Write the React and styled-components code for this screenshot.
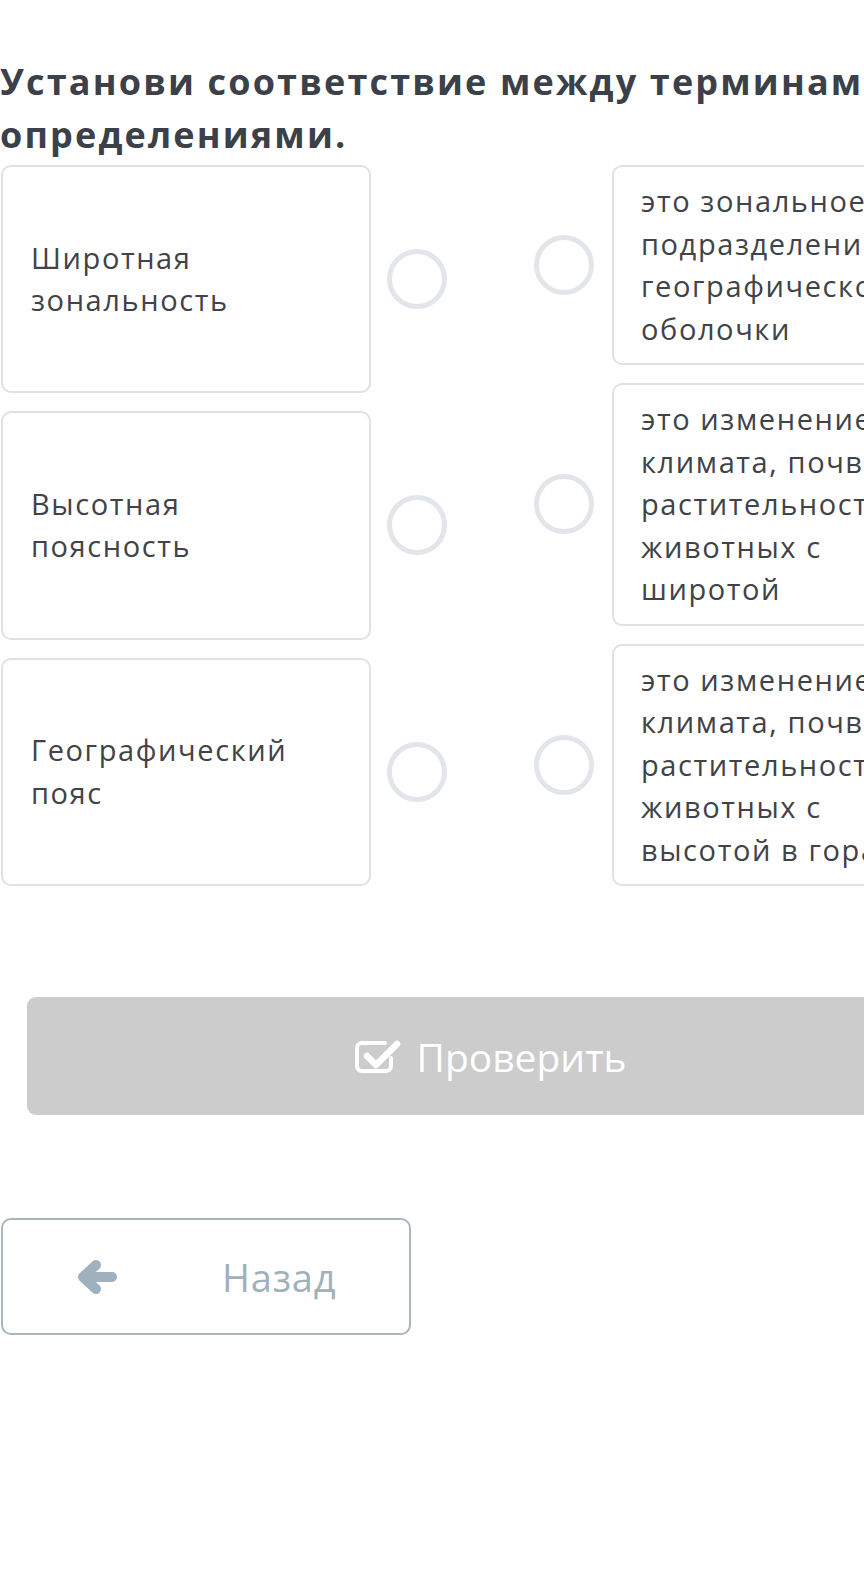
import styled, { createGlobalStyle } from "styled-components";

const GlobalStyle = createGlobalStyle`
  html, body {
    margin: 0;
    padding: 0;
    background: #ffffff;
    overflow-x: hidden;
  }
  body {
    font-family: "Open Sans", "Liberation Sans", sans-serif;
  }
`;

const Page = styled.div`
  width: 982px;
  padding: 55px 0 200px 0;
`;

const Title = styled.h1`
  margin: 0 0 4px 0;
  font-size: 36px;
  line-height: 53px;
  font-weight: 700;
  letter-spacing: 0.06em;
  color: #3b4049;
`;

const Board = styled.div`
  display: flex;
  gap: 87px;
  margin-left: 1px;
`;

const Column = styled.div`
  display: flex;
  flex-direction: column;
  gap: 18px;
`;

const Row = styled.div`
  display: flex;
  align-items: center;
  gap: ${(p) => p.$gap}px;
  flex: ${(p) => (p.$grow ? 1 : "0 0 auto")};
`;

const Card = styled.div`
  box-sizing: border-box;
  width: 370px;
  align-self: stretch;
  display: flex;
  align-items: center;
  border: 2px solid #e1e1e1;
  border-radius: 10px;
  padding: ${(p) => (p.$side === "left" ? "10px 50px 10px 28px" : "13px 44px 13px 27px")};
  font-size: 29px;
  line-height: 42.5px;
  letter-spacing: 0.055em;
  color: #404347;
`;

const Dot = styled.div`
  box-sizing: border-box;
  flex: 0 0 60px;
  width: 60px;
  height: 60px;
  border-radius: 50%;
  border: 5px solid #e2e5e9;
`;

const CheckButton = styled.button`
  box-sizing: border-box;
  display: flex;
  align-items: center;
  justify-content: center;
  gap: 15px;
  width: 928px;
  height: 118px;
  margin: 111px 0 0 27px;
  border: none;
  border-radius: 9px;
  background: #cccccc;
  color: #ffffff;
  font-family: "Open Sans", "Liberation Sans", sans-serif;
  font-size: 39px;
  font-weight: 400;
`;

const BackButton = styled.button`
  box-sizing: border-box;
  display: flex;
  align-items: center;
  gap: 105px;
  width: 410px;
  height: 117px;
  margin: 103px 0 0 1px;
  padding: 0 0 0 74px;
  background: #ffffff;
  border: 2px solid #aab6be;
  border-radius: 10px;
  color: #a1b1bc;
  font-family: "Open Sans", "Liberation Sans", sans-serif;
  font-size: 38px;
  letter-spacing: 0.02em;
`;

const CheckIcon = () => (
  <svg width="46" height="34" viewBox="-2 -2 46 34">
    <path
      d="M34 17 V25 a5 5 0 0 1 -5 5 H5 a5 5 0 0 1 -5 -5 V7 a5 5 0 0 1 5 -5 H28"
      fill="none"
      stroke="#ffffff"
      strokeWidth="4"
      strokeLinecap="round"
    />
    <polyline
      points="10,15 19,24 40,3"
      fill="none"
      stroke="#ffffff"
      strokeWidth="6.5"
      strokeLinecap="round"
      strokeLinejoin="round"
    />
  </svg>
);

const ArrowIcon = () => (
  <svg width="40" height="36" viewBox="0 0 40 36">
    <path
      d="M35 18 H8 M19 6 L6 18 L19 30"
      fill="none"
      stroke="#9fb1be"
      strokeWidth="10"
      strokeLinecap="round"
      strokeLinejoin="round"
    />
  </svg>
);

const terms = ["Широтная зональность", "Высотная поясность", "Географический пояс"];
const definitions = [
  "это зональное подразделение географической оболочки",
  "это изменение климата, почвы, растительности и животных с широтой",
  "это изменение климата, почвы, растительности и животных с высотой в горах",
];

const App = () => {
  return (
    <Page>
      <GlobalStyle />
      <Title>Установи соответствие между терминами и определениями.</Title>
      <Board>
        <Column>
          {terms.map((t) => (
            <Row key={t} $gap={16} $grow>
              <Card $side="left">{t}</Card>
              <Dot />
            </Row>
          ))}
        </Column>
        <Column>
          {definitions.map((d) => (
            <Row key={d} $gap={18}>
              <Dot />
              <Card $side="right">{d}</Card>
            </Row>
          ))}
        </Column>
      </Board>
      <CheckButton>
        <CheckIcon />
        Проверить
      </CheckButton>
      <BackButton>
        <ArrowIcon />
        Назад
      </BackButton>
    </Page>
  );
};

export default App;
